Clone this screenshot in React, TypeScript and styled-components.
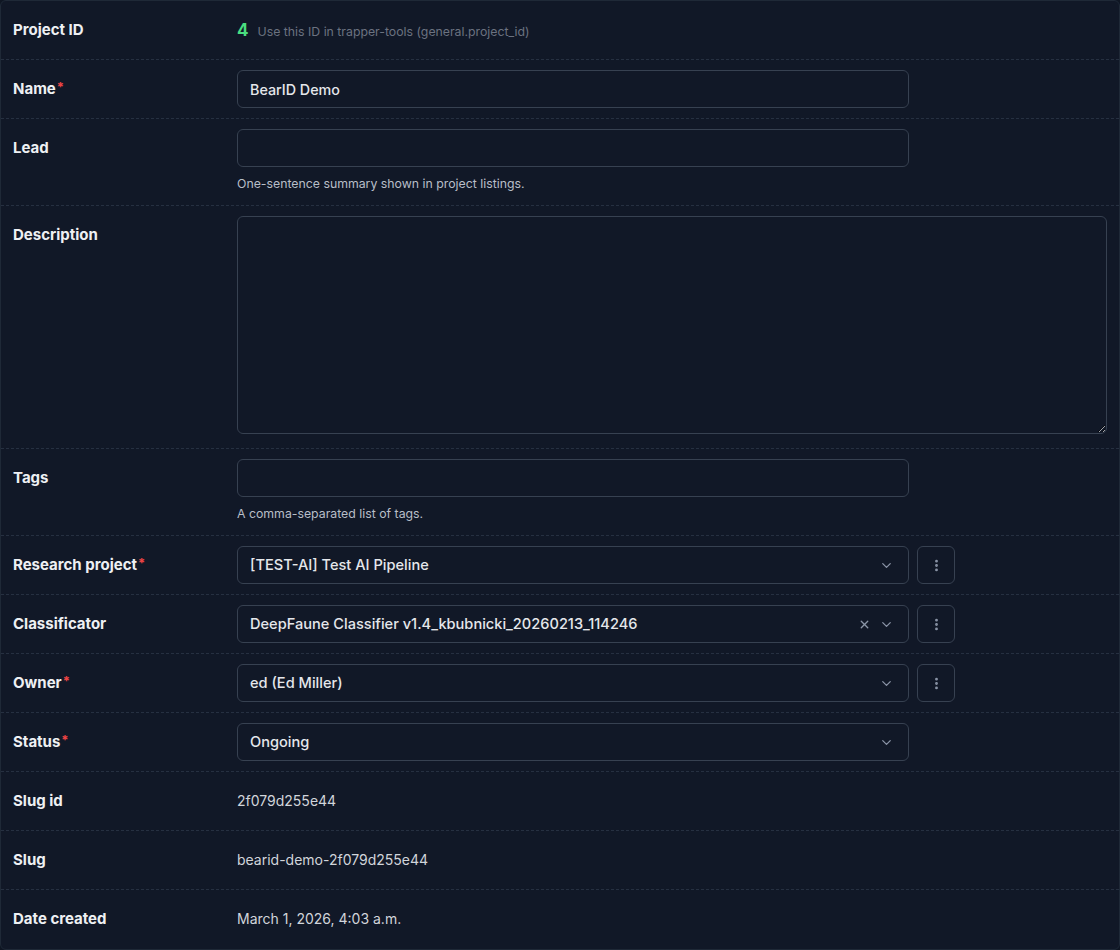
import React from 'react'
import styled, {createGlobalStyle} from 'styled-components'
import {ChevronDown, X, EllipsisVertical} from 'lucide-react'

const GlobalStyle = createGlobalStyle`
    html, body {
        margin: 0;
        padding: 0;
        background: #0f1623;
        font-family: Inter, "Noto Sans", sans-serif;
    }
    * { box-sizing: border-box; }
`

type Row = {label: string; required?: boolean; kind: string; value?: string; help?: string; clear?: boolean}

const rows: Row[] = [
    {label: 'Name', required: true, kind: 'input', value: 'BearID Demo'},
    {label: 'Lead', kind: 'input', value: '', help: 'One-sentence summary shown in project listings.'},
    {label: 'Description', kind: 'textarea'},
    {label: 'Tags', kind: 'input', value: '', help: 'A comma-separated list of tags.'},
    {label: 'Research project', required: true, kind: 'select', value: '[TEST-AI] Test AI Pipeline'},
    {label: 'Classificator', kind: 'select', value: 'DeepFaune Classifier v1.4_kbubnicki_20260213_114246', clear: true},
    {label: 'Owner', required: true, kind: 'select', value: 'ed (Ed Miller)'},
    {label: 'Status', required: true, kind: 'status', value: 'Ongoing'},
    {label: 'Slug id', kind: 'text', value: '2f079d255e44'},
    {label: 'Slug', kind: 'text', value: 'bearid-demo-2f079d255e44'},
    {label: 'Date created', kind: 'text', value: 'March 1, 2026, 4:03 a.m.'},
]

export default function App() {
    return (
        <>
            <GlobalStyle/>
            <Frame>
                <FieldRow>
                    <Label>Project ID</Label>
                    <Field>
                        <IdLine>
                            <IdValue>4</IdValue>
                            <IdHint>Use this ID in trapper-tools (general.project_id)</IdHint>
                        </IdLine>
                    </Field>
                </FieldRow>
                {rows.map((r) => (
                    <FieldRow key={r.label}>
                        <Label>
                            {r.label}
                            {r.required && <Req>*</Req>}
                        </Label>
                        <Field>
                            {r.kind === 'input' && <TextInput defaultValue={r.value}/>}
                            {r.kind === 'textarea' && <TextArea/>}
                            {(r.kind === 'select' || r.kind === 'status') && (
                                <SelectLine>
                                    <Select>
                                        <SelectValue>{r.value}</SelectValue>
                                        {r.clear && <X size={13} strokeWidth={2.5} color="#8b95a7"/>}
                                        <ChevronDown size={15} strokeWidth={2} color="#8b95a7"/>
                                    </Select>
                                    {r.kind === 'select' && (
                                        <KebabButton>
                                            <EllipsisVertical size={15} strokeWidth={2.5} color="#8b95a7"/>
                                        </KebabButton>
                                    )}
                                </SelectLine>
                            )}
                            {r.kind === 'text' && <PlainValue>{r.value}</PlainValue>}
                            {r.help && <Help>{r.help}</Help>}
                        </Field>
                    </FieldRow>
                ))}
            </Frame>
        </>
    )
}

const Frame = styled.div`
    width: 1120px;
    height: 950px;
    background: #111827;
    border: 1px solid #1f2937;
    border-radius: 6px;
    overflow: hidden;
`

const FieldRow = styled.div`
    display: grid;
    grid-template-columns: 224px 1fr;
    padding: 10px 12px 10px 12px;
    border-bottom: 1px dashed #263041;

    &:last-child {
        border-bottom: none;
    }
`

const Label = styled.div`
    height: 38px;
    line-height: 38px;
    font-size: 15px;
    font-weight: 700;
    color: #eef0f3;
`

const Req = styled.span`
    color: #ef4444;
    font-size: 13px;
    margin-left: 1px;
    position: relative;
    top: -2px;
`

const Field = styled.div`
    display: flex;
    flex-direction: column;
    min-width: 0;
`

const IdLine = styled.div`
    display: flex;
    align-items: baseline;
    gap: 9px;
    height: 38px;
    line-height: 38px;
`

const IdValue = styled.span`
    font-size: 17px;
    font-weight: 700;
    color: #4ade80;
`

const IdHint = styled.span`
    font-size: 12.3px;
    color: #6b7280;
`

const TextInput = styled.input`
    width: 672px;
    height: 38px;
    background: #111827;
    border: 1px solid #374151;
    border-radius: 6px;
    padding: 0 12px;
    color: #e5e7eb;
    font-family: Inter, sans-serif;
    font-size: 14.3px;
    font-weight: 500;
    outline: none;
`

const TextArea = styled.textarea`
    display: block;
    width: 870px;
    height: 218px;
    margin-bottom: 4px;
    background: #111827;
    border: 1px solid #374151;
    border-radius: 6px;
    padding: 8px 12px;
    color: #e5e7eb;
    font-family: Inter, sans-serif;
    font-size: 14px;
    outline: none;
    resize: vertical;
`

const Help = styled.div`
    margin-top: 8px;
    margin-bottom: 2px;
    font-size: 12.3px;
    line-height: 18px;
    color: #b8bec8;
`

const SelectLine = styled.div`
    display: flex;
    gap: 8px;
`

const Select = styled.div`
    width: 672px;
    height: 38px;
    display: flex;
    align-items: center;
    gap: 8px;
    padding: 0 14px 0 12px;
    border: 1px solid #374151;
    border-radius: 6px;
    background: #111827;
`

const SelectValue = styled.span`
    flex: 1;
    font-size: 14.6px;
    font-weight: 500;
    color: #e5e7eb;
    white-space: nowrap;
    overflow: hidden;
`

const KebabButton = styled.button`
    width: 38px;
    height: 38px;
    display: flex;
    align-items: center;
    justify-content: center;
    padding: 0;
    background: #111827;
    border: 1px solid #374151;
    border-radius: 6px;
`

const PlainValue = styled.div`
    height: 38px;
    line-height: 38px;
    font-size: 14px;
    color: #d1d5db;
`
